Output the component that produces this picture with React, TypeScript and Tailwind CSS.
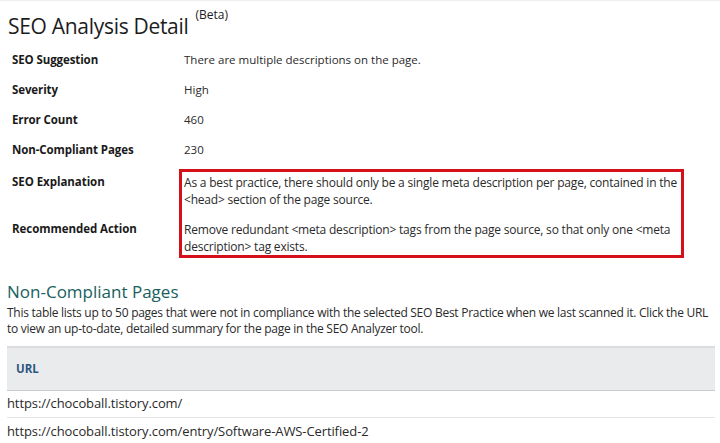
import React from "react";

const rows: [string, string][] = [
  ["SEO Suggestion", "There are multiple descriptions on the page."],
  ["Severity", "High"],
  ["Error Count", "460"],
  ["Non-Compliant Pages", "230"],
];

export default function App() {
  return (
    <div
      className="w-[720px] h-[443px] overflow-hidden bg-white text-[#222] border-t border-[#eeeeee]"
      style={{ fontFamily: '"Open Sans", "Noto Sans", sans-serif' }}
    >
      <div className="pl-[8px] pt-[10px] flex items-start">
        <h1 className="text-[21px] leading-[30px] tracking-[-0.3px] text-[#1c1c1c]">SEO Analysis Detail</h1>
        <span className="ml-[7px] text-[12px] leading-[14px] mt-[-3px] text-[#1c1c1c]">(Beta)</span>
      </div>

      <div className="pl-[12px] mt-[10px]">
        {rows.map(([k, v]) => (
          <div key={k} className="grid grid-cols-[172px_1fr] h-[30px] items-start text-[11.5px] leading-[18px]">
            <div className="font-bold text-[#1a1a1a] tracking-[-0.1px]">{k}</div>
            <div className="text-[#2a2a2a]">{v}</div>
          </div>
        ))}
        <div className="grid grid-cols-[167px_505px] mt-[-2px]">
          <div className="flex flex-col text-[11.5px] leading-[17px] font-bold text-[#1a1a1a] tracking-[-0.05px] pt-[4px]">
            <div className="h-[47px]">SEO Explanation</div>
            <div>Recommended Action</div>
          </div>
          <div className="border-[3px] border-[#d4111b] pl-[2px] pr-[2px] pt-[2px] pb-[0px] text-[12px] leading-[17px] tracking-[-0.2px] text-[#2a2a2a]">
            <p className="h-[47px]">
              As a best practice, there should only be a single meta description per page, contained in the &lt;head&gt; section of the page source.
            </p>
            <p>
              Remove redundant &lt;meta description&gt; tags from the page source, so that only one &lt;meta description&gt; tag exists.
            </p>
          </div>
        </div>
      </div>

      <div className="pl-[7px] pr-[5px] mt-[24px]">
        <h2 className="text-[17px] leading-[20px] text-[#17605e]">Non-Compliant Pages</h2>
        <p className="mt-[3px] text-[12px] leading-[16px] text-[#2a2a2a] tracking-[-0.27px]">
          This table lists up to 50 pages that were not in compliance with the selected SEO Best Practice when we last scanned it. Click the URL to view an up-to-date, detailed summary for the page in the SEO Analyzer tool.
        </p>
        <div className="mt-[9px] bg-[#e9ebed] border-t-[2px] border-[#dadcde] border-b border-b-[#c9cbcd] h-[45px] flex items-center pl-[9px]">
          <span className="text-[11.5px] font-bold text-[#2b5680]">URL</span>
        </div>
        <div className="h-[27px] flex items-center border-b border-[#e4e4e4] text-[13px] tracking-[-0.1px] text-[#2a2a2a]">
          https://chocoball.tistory.com/
        </div>
        <div className="h-[27px] flex items-center text-[13px] tracking-[-0.1px] text-[#2a2a2a]">
          https://chocoball.tistory.com/entry/Software-AWS-Certified-2
        </div>
      </div>
    </div>
  );
}
